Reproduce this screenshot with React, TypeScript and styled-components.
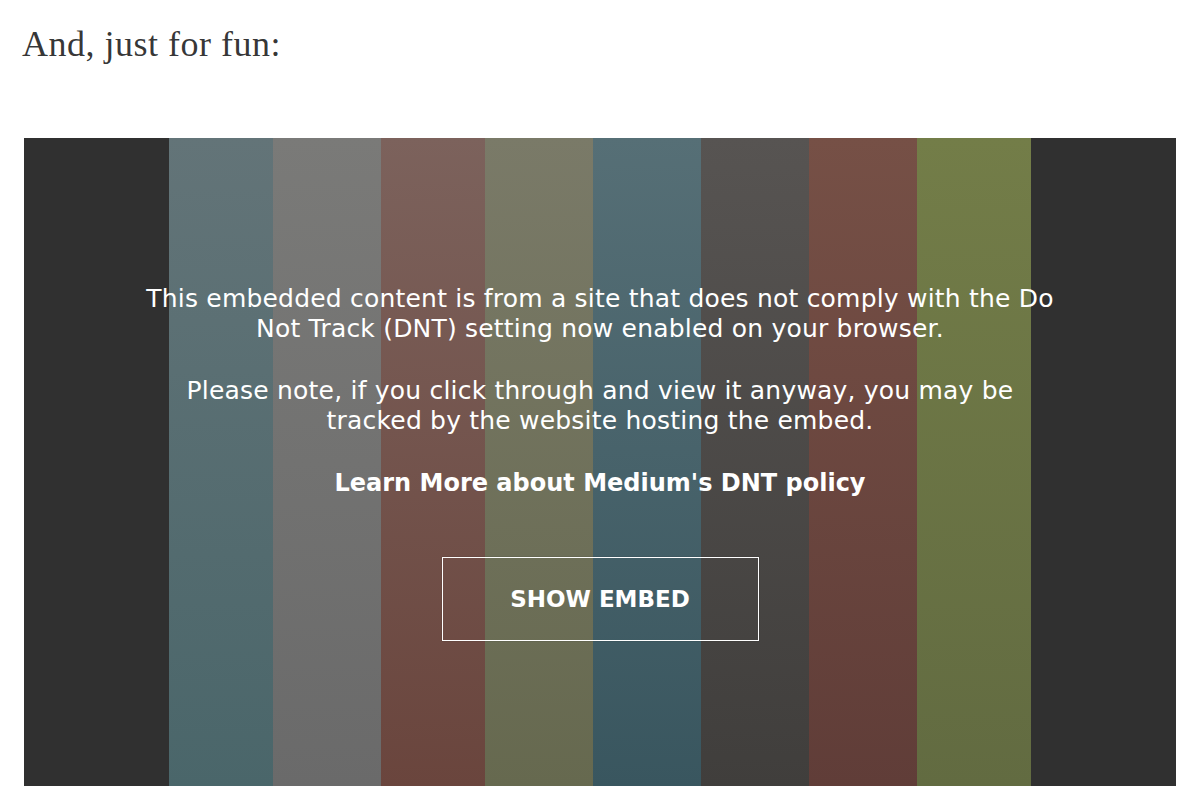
import React from "react";
import styled, { createGlobalStyle } from "styled-components";

const Global = createGlobalStyle`
  html, body { margin: 0; padding: 0; background: #ffffff; }
  body { width: 1200px; height: 810px; overflow: hidden; }
`;

const Page = styled.div`
  display: flex;
  flex-direction: column;
  padding: 22px 24px 0 24px;
`;

const Heading = styled.p`
  margin: 0 0 0 -2px;
  font-family: "Liberation Serif", "Times New Roman", serif;
  font-size: 36px;
  line-height: 44px;
  color: rgba(0, 0, 0, 0.8);
  letter-spacing: 0.5px;
`;

const Embed = styled.div`
  position: relative;
  margin-top: 72px;
  width: 1152px;
  height: 648px;
  display: flex;
  background: #303030;
`;

const Stripe = styled.div<{ $w: number; $top: string; $bottom: string }>`
  width: ${(p) => p.$w}px;
  height: 100%;
  background: linear-gradient(to bottom, ${(p) => p.$top}, ${(p) => p.$bottom});
`;

const Overlay = styled.div`
  position: absolute;
  inset: 0;
  display: flex;
  flex-direction: column;
  align-items: center;
  justify-content: center;
  color: #ffffff;
  font-family: "DejaVu Sans", Verdana, sans-serif;
  text-align: center;
`;

const Notice = styled.p`
  margin: 0 0 32px 0;
  width: 918px;
  font-size: 25px;
  line-height: 30px;
  letter-spacing: 0.2px;
`;

const LearnLink = styled.a`
  display: block;
  margin: 0 0 59px 0;
  font-size: 24px;
  line-height: 30px;
  font-weight: bold;
  color: #ffffff;
  text-decoration: none;
`;

const ShowButton = styled.button`
  width: 317px;
  height: 84px;
  background: transparent;
  border: 1px solid #ffffff;
  box-shadow: 0 0 1px rgba(0, 0, 0, 0.4);
  color: #ffffff;
  font-family: "DejaVu Sans", Verdana, sans-serif;
  font-size: 23px;
  font-weight: bold;
  cursor: pointer;
`;

const stripes = [
  { w: 145, top: "#303030", bottom: "#303030" },
  { w: 104, top: "#637478", bottom: "#4a666a" },
  { w: 108, top: "#7a7a78", bottom: "#6a6a6a" },
  { w: 104, top: "#7c625c", bottom: "#6a453d" },
  { w: 108, top: "#7a7a68", bottom: "#66694f" },
  { w: 108, top: "#566f76", bottom: "#39565f" },
  { w: 108, top: "#575452", bottom: "#403e3c" },
  { w: 108, top: "#765046", bottom: "#603d38" },
  { w: 114, top: "#737d48", bottom: "#626b41" },
  { w: 145, top: "#303030", bottom: "#303030" },
];

export default function App() {
  return (
    <>
      <Global />
      <Page>
        <Heading>And, just for fun:</Heading>
        <Embed>
          {stripes.map((s, i) => (
            <Stripe key={i} $w={s.w} $top={s.top} $bottom={s.bottom} />
          ))}
          <Overlay>
            <Notice>
              This embedded content is from a site that does not comply with the Do Not Track (DNT) setting now enabled on your browser.
            </Notice>
            <Notice>
              Please note, if you click through and view it anyway, you may be tracked by the website hosting the embed.
            </Notice>
            <LearnLink href="#">Learn More about Medium's DNT policy</LearnLink>
            <ShowButton>SHOW EMBED</ShowButton>
          </Overlay>
        </Embed>
      </Page>
    </>
  );
}
